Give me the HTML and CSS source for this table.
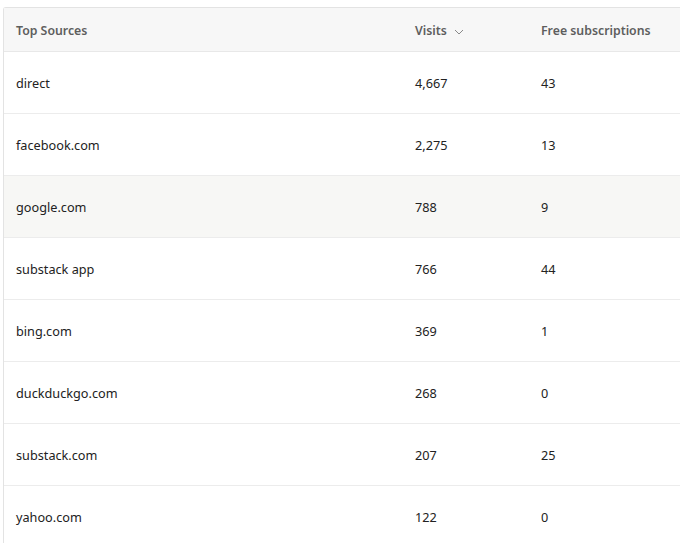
FILE: index.html
```html
<!DOCTYPE html>
<html lang="en">
<head>
  <meta charset="UTF-8">
  <title>Top Sources</title>
  <link rel="stylesheet" href="styles.css">
</head>
<body>
  <div class="sources-card">
    <table class="sources">
      <thead>
        <tr>
          <th class="col-source">Top Sources</th>
          <th class="col-visits">Visits <svg class="sort" width="10" height="6" viewBox="0 0 10 6"><path d="M1 1l4 4 4-4" fill="none" stroke="#8a8a8a" stroke-width="1"/></svg></th>
          <th class="col-subs">Free subscriptions</th>
        </tr>
      </thead>
      <tbody>
        <tr><td>direct</td><td>4,667</td><td>43</td></tr>
        <tr><td>facebook.com</td><td>2,275</td><td>13</td></tr>
        <tr class="hover"><td>google.com</td><td>788</td><td>9</td></tr>
        <tr><td>substack app</td><td>766</td><td>44</td></tr>
        <tr><td>bing.com</td><td>369</td><td>1</td></tr>
        <tr><td>duckduckgo.com</td><td>268</td><td>0</td></tr>
        <tr><td>substack.com</td><td>207</td><td>25</td></tr>
        <tr><td>yahoo.com</td><td>122</td><td>0</td></tr>
      </tbody>
    </table>
  </div>
</body>
</html>
```

FILE: styles.css
```css
body {
  margin: 0;
  padding: 7px 0 0 3px;
  background: #fff;
  font-family: "Noto Sans", "Open Sans", sans-serif;
  overflow: hidden;
}
.sources-card {
  border: 1px solid #e3e3e3;
  border-right: none;
  border-radius: 3px 0 0 0;
}
.sources {
  width: 100%;
  border-collapse: collapse;
}
.sources th {
  height: 41px;
  padding: 2px 12px 0;
  background: #f7f7f7;
  color: #5e5e5e;
  font-size: 12.3px;
  font-weight: 600;
  text-align: left;
  border-bottom: 1px solid #e8e8e8;
}
.col-source {
  width: 375px;
}
.col-visits {
  width: 102px;
}
.sort {
  margin-left: 4px;
  vertical-align: middle;
}
.sources td {
  height: 61px;
  padding: 0 12px;
  color: #222;
  font-size: 12.7px;
  border-bottom: 1px solid #ececec;
}
.sources tr.hover td {
  background: #f7f7f5;
}
```
